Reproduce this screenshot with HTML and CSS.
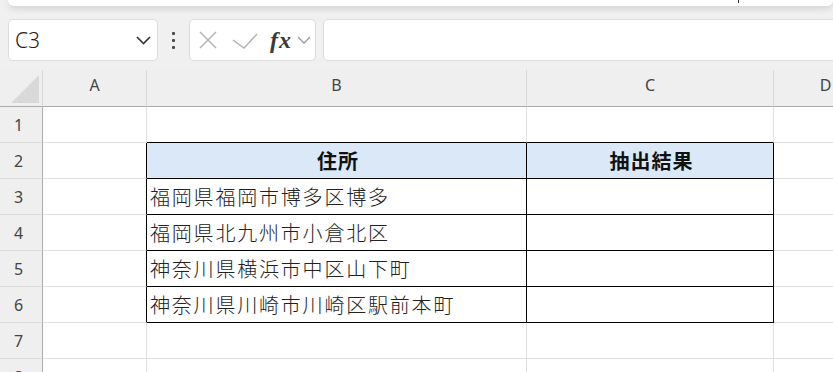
FILE: index.html
```html
<!DOCTYPE html>
<html lang="ja">
<head>
  <meta charset="UTF-8" />
  <title>Sheet</title>
  <link rel="stylesheet" href="styles.css">
</head>
<body>
  <div class="topbar"><span class="caret"></span></div>

  <!-- Name box and formula bar -->
  <div class="formula-row">
    <div class="namebox">
      <span class="ref">C3</span>
      <svg class="nb-chev" width="15" height="9" viewBox="0 0 15 9"><path d="M1 1L7.5 7.5L14 1" fill="none" stroke="#333" stroke-width="1.6"/></svg>
    </div>
    <div class="grip"><i></i><i></i><i></i></div>
    <div class="fbuttons">
      <svg width="18" height="18" viewBox="0 0 18 18"><path d="M1 1L17 17M17 1L1 17" stroke="#b3b3b3" stroke-width="1.5"/></svg>
      <svg class="chk" width="26" height="16" viewBox="0 0 26 16"><path d="M1 7L12 15L25 1" fill="none" stroke="#b3b3b3" stroke-width="1.5"/></svg>
      <span class="fx">fx</span>
      <svg class="fx-chev" width="14" height="8" viewBox="0 0 14 8"><path d="M1 1L7 7L13 1" fill="none" stroke="#9a9a9a" stroke-width="1.3"/></svg>
    </div>
    <div class="finput"></div>
  </div>

  <!-- Grid -->
  <div class="sheet">
    <div class="corner"><div class="tri"></div></div>
    <div class="colhdr">A</div>
    <div class="colhdr">B</div>
    <div class="colhdr">C</div>
    <div class="colhdr">D</div>

    <div class="rowhdr">1</div>
    <div class="cell"></div>
    <div class="cell edge-b"></div>
    <div class="cell edge-b"></div>
    <div class="cell"></div>

    <div class="rowhdr">2</div>
    <div class="cell edge-r"></div>
    <div class="cell tb th">住所</div>
    <div class="cell tb th">抽出結果</div>
    <div class="cell"></div>

    <div class="rowhdr">3</div>
    <div class="cell edge-r"></div>
    <div class="cell tb">福岡県福岡市博多区博多</div>
    <div class="cell tb"></div>
    <div class="cell"></div>

    <div class="rowhdr">4</div>
    <div class="cell edge-r"></div>
    <div class="cell tb">福岡県北九州市小倉北区</div>
    <div class="cell tb"></div>
    <div class="cell"></div>

    <div class="rowhdr">5</div>
    <div class="cell edge-r"></div>
    <div class="cell tb">神奈川県横浜市中区山下町</div>
    <div class="cell tb"></div>
    <div class="cell"></div>

    <div class="rowhdr">6</div>
    <div class="cell edge-r"></div>
    <div class="cell tb">神奈川県川崎市川崎区駅前本町</div>
    <div class="cell tb"></div>
    <div class="cell"></div>

    <div class="rowhdr">7</div>
    <div class="cell"></div>
    <div class="cell"></div>
    <div class="cell"></div>
    <div class="cell"></div>

    <div class="rowhdr">8</div>
    <div class="cell"></div>
    <div class="cell"></div>
    <div class="cell"></div>
    <div class="cell"></div>
  </div>
</body>
</html>
```

FILE: styles.css
```css
* { box-sizing: border-box; margin: 0; padding: 0; }
body {
  background: #f0f0f0;
  font-family: 'Noto Sans', 'Noto Sans CJK JP', sans-serif;
  overflow: hidden;
  width: 833px;
  height: 372px;
}

.topbar {
  position: relative;
  height: 6px;
  margin-left: 8px;
  background: #fff;
  border-radius: 0 0 8px 8px;
  box-shadow: 0 2px 7px rgba(0, 0, 0, 0.16);
}
.caret {
  position: absolute;
  left: 730px;
  top: 0;
  width: 1px;
  height: 3px;
  background: #333;
}

.formula-row {
  display: flex;
  height: 42px;
  margin-top: 13px;
  padding-left: 8px;
}

.namebox, .fbuttons, .finput {
  background: #fff;
  border: 1px solid #dcdcdc;
  border-radius: 5px;
}

.namebox {
  width: 150px;
  display: flex;
  align-items: center;
  padding-left: 6px;
}
.ref { font-size: 21px; font-weight: 300; color: #222; line-height: 1; }
.nb-chev { margin-left: auto; margin-right: 6px; }

.grip {
  width: 31px;
  display: flex;
  flex-direction: column;
  align-items: center;
  justify-content: center;
  gap: 4px;
}
.grip i { width: 3px; height: 3px; background: #4a4a4a; border-radius: 1px; }

.fbuttons {
  width: 127px;
  margin-right: 7px;
  display: flex;
  align-items: center;
  padding-left: 9px;
}
.chk { margin-left: 15px; margin-top: 1px; }
.fx {
  margin-left: 12px;
  font-family: 'Liberation Serif', serif;
  font-style: italic;
  font-weight: bold;
  font-size: 24px;
  letter-spacing: 1px;
  color: #3a3a3a;
  line-height: 1;
}
.fx-chev { margin-left: 5px; }

.finput { flex: 1; margin-right: -10px; }

.sheet {
  margin-top: 9px;
  display: grid;
  grid-template-columns: 43px 104px 380px 247px 104px;
  grid-template-rows: 37px repeat(8, 36px);
}

.corner {
  background: #efefef;
  border-right: 1px solid #d8d8d8;
  border-bottom: 1px solid #ababab;
  padding: 5px 0 0 11px;
}
.tri {
  width: 28px;
  height: 28px;
  background: #d9d9d9;
  clip-path: polygon(100% 0, 100% 100%, 0 100%);
}

.colhdr {
  background: #efefef;
  border-right: 1px solid #d8d8d8;
  border-bottom: 1px solid #ababab;
  display: flex;
  align-items: center;
  justify-content: center;
  padding-bottom: 6px;
  font-size: 16px;
  color: #444;
}

.rowhdr {
  background: #efefef;
  border-right: 1px solid #ababab;
  border-bottom: 1px solid #dadada;
  display: flex;
  align-items: center;
  justify-content: center;
  padding-right: 5px;
  font-size: 16px;
  color: #444;
}

.cell {
  background: #fff;
  border-right: 1px solid #e1e1e1;
  border-bottom: 1px solid #e1e1e1;
}
.edge-r { border-right-color: #000; }
.edge-b { border-bottom-color: #000; }

.tb {
  border-right-color: #000;
  border-bottom-color: #000;
  display: flex;
  align-items: center;
  padding-left: 3px;
  font-family: 'Noto Sans CJK JP', sans-serif;
  font-size: 20px;
  font-weight: 300;
  letter-spacing: 1.8px;
  color: #222;
  white-space: nowrap;
}
.th {
  background: #dae8f7;
  justify-content: center;
  font-weight: bold;
  letter-spacing: 1px;
  color: #111;
}
```
